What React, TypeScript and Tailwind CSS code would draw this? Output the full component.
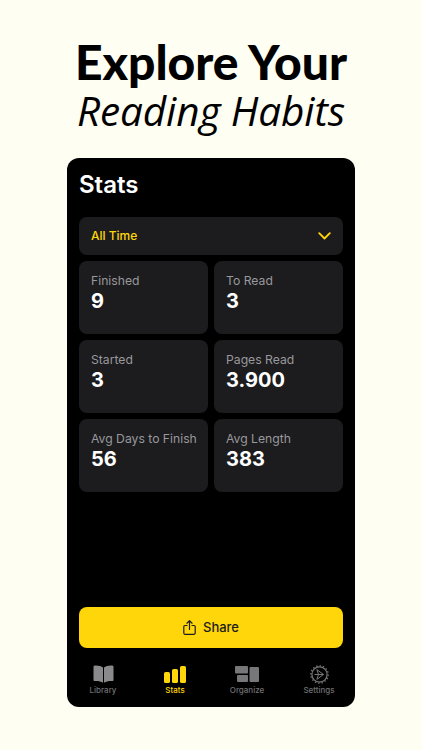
const stats = [
  { label: "Finished", value: "9" },
  { label: "To Read", value: "3" },
  { label: "Started", value: "3" },
  { label: "Pages Read", value: "3.900" },
  { label: "Avg Days to Finish", value: "56" },
  { label: "Avg Length", value: "383" },
];

const BookIcon = () => (
  <svg width="21" height="18" viewBox="0 0 21 18" fill="#8a8a8c">
    <path d="M10 2.6C8.4 1.2 5.6 0.4 1.6 0.6 0.9 0.7 0.5 1.1 0.5 1.8V15c0 .7.5 1.1 1.2 1 3.4-.2 6.2.3 8.3 1.8z" />
    <path d="M11 2.6c1.6-1.4 4.4-2.2 8.4-2 .7.1 1.1.5 1.1 1.2V15c0 .7-.5 1.1-1.2 1-3.4-.2-6.2.3-8.3 1.8z" />
  </svg>
);

const BarsIcon = () => (
  <svg width="22" height="17" viewBox="0 0 22 17" fill="#ffd60a">
    <rect x="0" y="6" width="6" height="11" rx="1.6" />
    <rect x="8" y="3" width="6" height="14" rx="1.6" />
    <rect x="16" y="0" width="6" height="17" rx="1.6" />
  </svg>
);

const OrganizeIcon = () => (
  <svg width="24" height="16" viewBox="0 0 24 16" fill="#77777a">
    <rect x="0" y="0" width="13" height="7.5" rx="1" />
    <rect x="2" y="9" width="11" height="7" rx="1" />
    <rect x="14.5" y="1" width="9.5" height="15" rx="1" />
  </svg>
);

const GearIcon = () => (
  <svg width="19" height="19" viewBox="0 0 19 19" fill="none" stroke="#77777a" strokeWidth="1">
    <circle cx="9.5" cy="9.5" r="7.6" strokeWidth="1.2" />
    <circle cx="9.5" cy="9.5" r="8.7" strokeWidth="1.3" strokeDasharray="1.4 2" />
    <path d="M6.8 4.6 13.6 9.5 6.8 14.4M6.8 4.6 8.5 9.5 6.8 14.4M8.5 9.5H13.6M4.5 9.5H8.5" />
  </svg>
);

const ShareIcon = () => (
  <svg width="13" height="15" viewBox="0 0 13 15" fill="none" stroke="#1c1c1e" strokeWidth="1.2" strokeLinecap="round" strokeLinejoin="round">
    <path d="M4 5.5H2a1.2 1.2 0 0 0-1.2 1.2v6.4A1.2 1.2 0 0 0 2 14.3h9a1.2 1.2 0 0 0 1.2-1.2V6.7A1.2 1.2 0 0 0 11 5.5H9" />
    <path d="M6.5 9.5V.9M3.9 3.2 6.5.7l2.6 2.5" />
  </svg>
);

const tabs = [
  { label: "Library", icon: <BookIcon />, active: false },
  { label: "Stats", icon: <BarsIcon />, active: true },
  { label: "Organize", icon: <OrganizeIcon />, active: false },
  { label: "Settings", icon: <GearIcon />, active: false },
];

export default function App() {
  return (
    <div className="flex h-[750px] w-[422px] flex-col items-center overflow-hidden bg-[#fffef2] pt-[37px] font-['Inter','Liberation_Sans',sans-serif]">
      <h1 className="text-[48px] leading-[49px] font-black text-black font-['Lato','Liberation_Sans',sans-serif] whitespace-nowrap">
        Explore Your
      </h1>
      <p className="text-[40.5px] leading-[50px] text-black italic font-['Open_Sans','Liberation_Sans',sans-serif] font-normal tracking-[-0.1px] whitespace-nowrap">
        Reading Habits
      </p>

      <div className="mt-[22px] mb-[43px] flex w-[288px] flex-1 flex-col rounded-[12px] bg-black px-[12px]">
        <div className="pt-[12px] text-[24px] leading-[29px] font-semibold text-white">Stats</div>

        <div className="mt-[18px] flex h-[38px] items-center justify-between rounded-[8px] bg-[#1c1c1e] px-[12px]">
          <span className="text-[12px] font-medium text-[#ffd60a]">All Time</span>
          <svg width="13" height="8" viewBox="0 0 13 8" fill="none" stroke="#ffd60a" strokeWidth="1.8" strokeLinecap="round" strokeLinejoin="round">
            <path d="M1.2 1.2 6.5 6.5l5.3-5.3" />
          </svg>
        </div>

        <div className="mt-[6px] grid grid-cols-2 gap-[6px]">
          {stats.map((s) => (
            <div key={s.label} className="h-[73px] rounded-[8px] bg-[#1c1c1e] px-[12px] pt-[12px]">
              <div className="text-[12.2px] leading-[15px] whitespace-nowrap text-[#98989d]">{s.label}</div>
              <div className="mt-[1px] text-[20px] leading-[24px] font-bold text-white">{s.value}</div>
            </div>
          ))}
        </div>

        <button className="mt-auto flex h-[41px] items-center justify-center gap-[7px] rounded-[8px] bg-[#ffd60a] text-[13px] font-medium text-[#1c1c1e]">
          <ShareIcon />
          Share
        </button>

        <div className="mx-[-12px] mt-[16px] mb-[12px] grid grid-cols-4">
          {tabs.map((t) => (
            <div key={t.label} className="flex flex-col items-center">
              <div className="flex h-[20px] items-center">{t.icon}</div>
              <div className={`mt-[1px] text-[8px] leading-[10px] font-medium ${t.active ? "text-[#ffd60a]" : "text-[#707073]"}`}>
                {t.label}
              </div>
            </div>
          ))}
        </div>
      </div>
    </div>
  );
}
